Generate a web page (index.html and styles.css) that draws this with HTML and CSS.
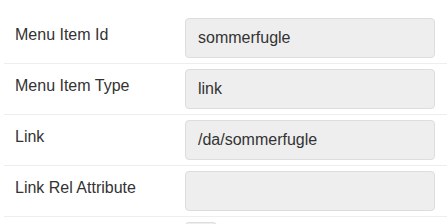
FILE: index.html
```html
<!DOCTYPE html>
<html lang="en">
<head>
    <meta charset="UTF-8">
    <meta name="viewport" content="width=device-width, initial-scale=1.0">
    <title>Menu Item</title>
    <link rel="stylesheet" href="styles.css">
</head>
<body>
    <!-- Menu item properties -->
    <div class="props">
        <div class="row">
            <div class="label">Menu Item Id</div>
            <div class="value">sommerfugle</div>
        </div>
        <div class="row">
            <div class="label">Menu Item Type</div>
            <div class="value">link</div>
        </div>
        <div class="row">
            <div class="label">Link</div>
            <div class="value">/da/sommerfugle</div>
        </div>
        <div class="row">
            <div class="label">Link Rel Attribute</div>
            <div class="value"></div>
        </div>
        <div class="row">
            <div class="label"></div>
            <div class="value small"></div>
        </div>
    </div>
</body>
</html>
```

FILE: styles.css
```css
:root {
    --text-color: #333;
    --line-color: #eee;
    --field-bg: #eee;
    --field-border: #ddd;
}

body {
    font-family: 'Liberation Sans', Arial, Helvetica, sans-serif;
    font-size: 16px;
    color: var(--text-color);
    background: #fff;
    margin: 0;
    padding: 0;
    overflow: hidden;
}

.props {
    padding-top: 12px;
    margin-left: 4px;
}

.row {
    display: flex;
    border-top: 1px solid var(--line-color);
    padding: 5px 0;
}

.row:first-child {
    border-top-color: transparent;
}

.label {
    width: 170px;
    flex: none;
    padding: 7px 0 0 11px;
    line-height: 20px;
}

.value {
    width: 250px;
    height: 40px;
    box-sizing: border-box;
    background-color: var(--field-bg);
    border: 1px solid var(--field-border);
    border-radius: 4px;
    padding: 0 12px;
    line-height: 38px;
    white-space: nowrap;
}

.value.small {
    width: 32px;
    padding: 0;
}
```
